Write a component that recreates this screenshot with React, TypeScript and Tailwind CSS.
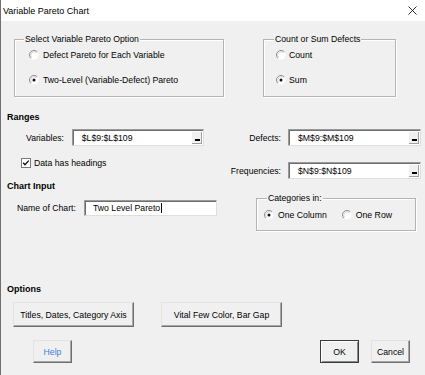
import React from "react";

function Radio({ checked = false }: { checked?: boolean }) {
  return (
    <svg width="10" height="10" viewBox="0 0 10 10" className="shrink-0">
      <circle cx="5" cy="5" r="4.5" fill="#fff" />
      <path d="M1.8 8.2 A4.5 4.5 0 0 1 8.2 1.8" fill="none" stroke="#8c8c8c" strokeWidth="1" />
      <path d="M2.6 7.4 A3.4 3.4 0 0 1 7.4 2.6" fill="none" stroke="#c8c8c8" strokeWidth="0.8" />
      {checked && <circle cx="5" cy="5" r="1.5" fill="#111" />}
    </svg>
  );
}

function Checkbox({ checked = false }: { checked?: boolean }) {
  return (
    <svg width="10" height="10" viewBox="0 0 10 10" className="shrink-0">
      <rect x="0.5" y="0.5" width="9" height="9" fill="#fff" stroke="#7a7a7a" strokeWidth="1" />
      {checked && <path d="M2.2 4.8 L4 6.8 L7.8 2.6" fill="none" stroke="#111" strokeWidth="1.4" />}
    </svg>
  );
}

function Group({
  title,
  className = "",
  legendLeft = "left-[9px]",
  children,
}: {
  title: string;
  className?: string;
  legendLeft?: string;
  children: React.ReactNode;
}) {
  return (
    <div className={`relative border border-[#b4b4b4] shadow-[inset_1px_1px_0_#fff,1px_1px_0_#fff] ${className}`}>
      <span className={`absolute top-[-7px] ${legendLeft} bg-[#f0f0f0] px-[1px] leading-[12px]`}>{title}</span>
      {children}
    </div>
  );
}

function RangeInput({ value }: { value: string }) {
  return (
    <div className="flex h-[17px] w-[133px] border border-[#9a9a9a] border-r-[#dedede] border-b-[#dedede] bg-white shadow-[inset_1px_1px_0_#6e6e6e]">
      <span className="flex-1 pl-[9px] pt-[1px] leading-[14px]">{value}</span>
      <span className="relative my-[1px] mr-[1px] w-[11px] bg-[#f0f0f0] border-l border-t border-[#fdfdfd] shadow-[inset_-1px_-1px_0_#a0a0a0]">
        <span className="absolute left-[3px] bottom-[3px] h-[2px] w-[5px] bg-black" />
      </span>
    </div>
  );
}

function Button({
  label,
  className = "",
  isDefault = false,
}: {
  label: string;
  className?: string;
  isDefault?: boolean;
}) {
  const edge = isDefault
    ? "border border-[#3a3a3a] shadow-[inset_1px_1px_0_#fff,inset_-1px_-1px_0_#8a8a8a]"
    : "border border-[#e2e2e2] border-r-[#6e6e6e] border-b-[#6e6e6e] shadow-[inset_-1px_-1px_0_#a8a8a8]";
  return (
    <div className={`flex items-center justify-center bg-[#f0f0f0] ${edge} ${className}`}>
      {label}
    </div>
  );
}

export default function App() {
  return (
    <div className="flex h-[375px] w-[425px] flex-col overflow-hidden border-l border-[#6f6f6f] bg-[#f0f0f0] font-['Liberation_Sans',Arial,sans-serif] text-[8.7px] leading-[12px] text-black">
      {/* title bar */}
      <div className="flex h-[21px] shrink-0 items-center justify-between bg-white pl-[2px] pr-[8px]">
        <span className="text-[9px]">Variable Pareto Chart</span>
        <svg width="9" height="9" viewBox="0 0 9 9">
          <path d="M0.5 0.5 L8.5 8.5 M8.5 0.5 L0.5 8.5" stroke="#111" strokeWidth="0.9" />
        </svg>
      </div>

      {/* option groups */}
      <div className="mt-[18px] flex pl-[13px]">
        <Group title="Select Variable Pareto Option" className="h-[58px] w-[210px]">
          <div className="flex flex-col gap-[13px] pl-[14px] pt-[9px]">
            <div className="flex h-[12px] items-center gap-[4px]">
              <Radio />
              <span>Defect Pareto for Each Variable</span>
            </div>
            <div className="flex h-[12px] items-center gap-[4px]">
              <Radio checked />
              <span>Two-Level (Variable-Defect) Pareto</span>
            </div>
          </div>
        </Group>
        <Group title="Count or Sum Defects" legendLeft="left-[10px]" className="ml-[39px] h-[58px] w-[133px]">
          <div className="flex flex-col gap-[13px] pl-[12px] pt-[9px]">
            <div className="flex h-[12px] items-center gap-[3px]">
              <Radio />
              <span>Count</span>
            </div>
            <div className="flex h-[12px] items-center gap-[3px]">
              <Radio checked />
              <span>Sum</span>
            </div>
          </div>
        </Group>
      </div>

      {/* ranges */}
      <div className="mt-[14px] h-[12px] pl-[6px] text-[9px] font-bold">Ranges</div>
      <div className="mt-[6px] grid grid-cols-[203px_1fr] items-center">
        <div className="flex items-center pl-[25px]">
          <span className="w-[46px]">Variables:</span>
          <RangeInput value="$L$9:$L$109" />
        </div>
        <div className="flex items-center">
          <span className="w-[77px] text-right">Defects:</span>
          <div className="ml-[7px]">
            <RangeInput value="$M$9:$M$109" />
          </div>
        </div>
      </div>
      <div className="mt-[11px] grid grid-cols-[203px_1fr] items-start">
        <div className="flex h-[12px] items-center gap-[3px] pl-[20px]">
          <Checkbox checked />
          <span>Data has headings</span>
        </div>
        <div className="mt-[5px] flex items-center">
          <span className="w-[77px] text-right">Frequencies:</span>
          <div className="ml-[7px]">
            <RangeInput value="$N$9:$N$109" />
          </div>
        </div>
      </div>

      {/* chart input */}
      <div className="mt-[1px] h-[12px] pl-[6px] text-[9px] font-bold">Chart Input</div>
      <div className="mt-[6px] flex items-start pl-[16px]">
        <div className="mt-[2px] flex h-[16px] items-center">
          <span className="w-[67px]">Name of Chart:</span>
          <div className="flex h-[16px] w-[133px] items-center border border-[#9a9a9a] border-r-[#dedede] border-b-[#dedede] bg-white pl-[8px] shadow-[inset_1px_1px_0_#6e6e6e]">
            <span>Two Level Pareto</span>
            <span className="ml-[1px] h-[10px] w-[1px] bg-black" />
          </div>
        </div>
        <Group title="Categories in:" legendLeft="left-[10px]" className="ml-[39px] h-[33px] w-[160px]">
          <div className="flex items-center pl-[7px] pt-[10px]">
            <div className="flex h-[12px] items-center gap-[4px]">
              <Radio checked />
              <span>One Column</span>
            </div>
            <div className="ml-[15px] flex h-[12px] items-center gap-[4px]">
              <Radio />
              <span>One Row</span>
            </div>
          </div>
        </Group>
      </div>

      {/* options */}
      <div className="mt-[52px] h-[12px] pl-[6px] text-[9px] font-bold">Options</div>
      <div className="mt-[7px] flex pl-[12px]">
        <Button label="Titles, Dates, Category Axis" className="h-[25px] w-[121px]" />
        <Button label="Vital Few Color, Bar Gap" className="ml-[27px] h-[25px] w-[121px]" />
      </div>

      {/* footer */}
      <div className="mt-[13px] flex pl-[32px] pr-[15px]">
        <Button label="Help" className="h-[23px] w-[39px] text-[#3c7fd4]" />
        <Button label="OK" isDefault className="ml-auto h-[23px] w-[39px]" />
        <Button label="Cancel" className="ml-[12px] h-[23px] w-[39px]" />
      </div>
    </div>
  );
}
